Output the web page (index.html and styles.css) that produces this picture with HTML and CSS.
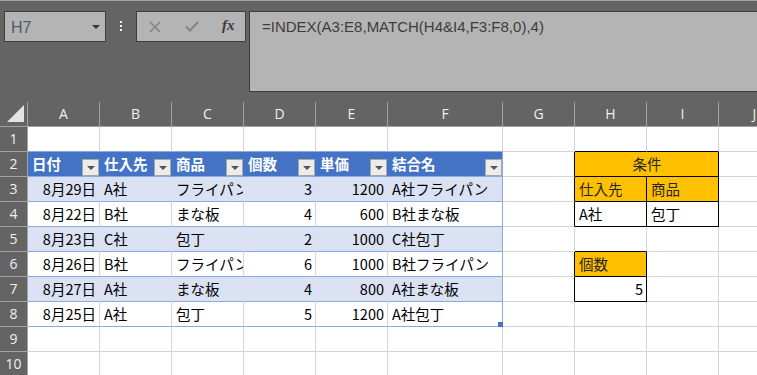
FILE: index.html
```html
<!DOCTYPE html>
<html lang="ja">
<head>
<meta charset="utf-8">
<title>Excel INDEX MATCH</title>
<link rel="stylesheet" href="styles.css">
</head>
<body>
<div class="topbar">
  <div class="namebox"><span class="ref">H7</span><svg class="nb-arrow" width="8" height="4" viewBox="0 0 8 4"><path d="M0 0H8L4 4Z"/></svg></div>
  <div class="dots"><i></i><i></i><i></i></div>
  <div class="fxbox">
    <svg class="ico-x" width="12" height="12" viewBox="0 0 12 12"><path d="M1 1L11 11M11 1L1 11"/></svg>
    <svg class="ico-ok" width="14" height="11" viewBox="0 0 14 11"><path d="M1 5.5L5 9.5L13 1"/></svg>
    <span class="fx">fx</span>
  </div>
  <div class="formula">=INDEX(A3:E8,MATCH(H4&amp;I4,F3:F8,0),4)</div>
</div>
<div class="sheet">
  <!-- column headers -->
  <div class="c corner"><svg width="27" height="24" viewBox="0 0 27 24"><path d="M24 3V20H7Z"/></svg></div>
  <div class="c ch">A</div><div class="c ch">B</div><div class="c ch">C</div><div class="c ch">D</div><div class="c ch">E</div><div class="c ch">F</div><div class="c ch">G</div><div class="c ch">H</div><div class="c ch">I</div><div class="c ch">J</div>

  <!-- row 1 -->
  <div class="c rh">1</div>
  <div class="c tt"></div><div class="c tt"></div><div class="c tt"></div><div class="c tt"></div><div class="c tt"></div><div class="c tt"></div>
  <div class="c"></div><div class="c bb"></div><div class="c bb"></div><div class="c"></div>

  <!-- row 2 -->
  <div class="c rh">2</div>
  <div class="c th">日付<span class="dd"><svg width="8" height="4" viewBox="0 0 8 4"><path d="M0 0H8L4 4Z"/></svg></span></div>
  <div class="c th">仕入先<span class="dd"><svg width="8" height="4" viewBox="0 0 8 4"><path d="M0 0H8L4 4Z"/></svg></span></div>
  <div class="c th">商品<span class="dd"><svg width="8" height="4" viewBox="0 0 8 4"><path d="M0 0H8L4 4Z"/></svg></span></div>
  <div class="c th">個数<span class="dd"><svg width="8" height="4" viewBox="0 0 8 4"><path d="M0 0H8L4 4Z"/></svg></span></div>
  <div class="c th">単価<span class="dd"><svg width="8" height="4" viewBox="0 0 8 4"><path d="M0 0H8L4 4Z"/></svg></span></div>
  <div class="c th tr">結合名<span class="dd"><svg width="8" height="4" viewBox="0 0 8 4"><path d="M0 0H8L4 4Z"/></svg></span></div>
  <div class="c br"></div>
  <div class="c org merged br bb">条件</div>
  <div class="c"></div>

  <!-- row 3 -->
  <div class="c rh">3</div>
  <div class="c band r">8月29日</div><div class="c band">A社</div><div class="c band">フライパン</div><div class="c band r">3</div><div class="c band r">1200</div><div class="c band tr">A社フライパン</div>
  <div class="c br"></div><div class="c org br bb">仕入先</div><div class="c org br bb">商品</div><div class="c"></div>

  <!-- row 4 -->
  <div class="c rh">4</div>
  <div class="c wr r">8月22日</div><div class="c wr">B社</div><div class="c wr">まな板</div><div class="c wr r">4</div><div class="c wr r">600</div><div class="c wr tr">B社まな板</div>
  <div class="c br"></div><div class="c br bb">A社</div><div class="c br bb">包丁</div><div class="c"></div>

  <!-- row 5 -->
  <div class="c rh">5</div>
  <div class="c band r">8月23日</div><div class="c band">C社</div><div class="c band">包丁</div><div class="c band r">2</div><div class="c band r">1000</div><div class="c band tr">C社包丁</div>
  <div class="c"></div><div class="c bb"></div><div class="c"></div><div class="c"></div>

  <!-- row 6 -->
  <div class="c rh">6</div>
  <div class="c wr r">8月26日</div><div class="c wr">B社</div><div class="c wr">フライパン</div><div class="c wr r">6</div><div class="c wr r">1000</div><div class="c wr tr">B社フライパン</div>
  <div class="c br"></div><div class="c org br bb">個数</div><div class="c"></div><div class="c"></div>

  <!-- row 7 -->
  <div class="c rh">7</div>
  <div class="c band r">8月27日</div><div class="c band">A社</div><div class="c band">まな板</div><div class="c band r">4</div><div class="c band r">800</div><div class="c band tr">A社まな板</div>
  <div class="c br"></div><div class="c r br bb">5</div><div class="c"></div><div class="c"></div>

  <!-- row 8 -->
  <div class="c rh">8</div>
  <div class="c wr r">8月25日</div><div class="c wr">A社</div><div class="c wr">包丁</div><div class="c wr r">5</div><div class="c wr r">1200</div><div class="c wr tr ov">A社包丁<span class="handle"></span></div>
  <div class="c"></div><div class="c"></div><div class="c"></div><div class="c"></div>

  <!-- row 9 -->
  <div class="c rh">9</div>
  <div class="c"></div><div class="c"></div><div class="c"></div><div class="c"></div><div class="c"></div><div class="c"></div><div class="c"></div><div class="c"></div><div class="c"></div><div class="c"></div>

  <!-- row 10 -->
  <div class="c rh">10</div>
  <div class="c"></div><div class="c"></div><div class="c"></div><div class="c"></div><div class="c"></div><div class="c"></div><div class="c"></div><div class="c"></div><div class="c"></div><div class="c"></div>
</div>
</body>
</html>
```

FILE: styles.css
```css
html, body {
  margin: 0;
  padding: 0;
}
body {
  width: 757px;
  height: 375px;
  overflow: hidden;
  background: #ffffff;
  font-family: "Noto Sans CJK JP", "Noto Sans", sans-serif;
}

/* ---------- formula bar ---------- */
.topbar {
  box-sizing: border-box;
  height: 102px;
  background: #646464;
  border-top: 1px solid #a3a3a3;
  padding: 10px 0 0 4px;
  display: flex;
  align-items: flex-start;
  width: 900px;
}
.namebox {
  box-sizing: border-box;
  width: 102px;
  height: 31px;
  background: #b4b4b4;
  border: 1px solid #3e3e3e;
  display: flex;
  align-items: center;
  justify-content: space-between;
  padding: 2px 5px 0 6px;
}
.ref {
  font-family: "Liberation Sans", Arial, sans-serif;
  font-size: 16px;
  color: #4d5a68;
}
.nb-arrow {
  fill: #3a3a3a;
  margin-top: -2px;
}
.dots {
  width: 30px;
  height: 31px;
  display: flex;
  flex-direction: column;
  align-items: center;
  padding-top: 10px;
  box-sizing: border-box;
  gap: 2px;
}
.dots i {
  display: block;
  width: 2px;
  height: 2px;
  background: #f2f2f2;
}
.fxbox {
  box-sizing: border-box;
  width: 110px;
  height: 31px;
  background: #b4b4b4;
  border: 1px solid #3e3e3e;
  display: flex;
  align-items: center;
  padding-left: 12px;
}
.ico-x path {
  stroke: #858585;
  stroke-width: 1.6;
  fill: none;
}
.ico-ok {
  margin-left: 24px;
}
.ico-ok path {
  stroke: #858585;
  stroke-width: 2.2;
  fill: none;
}
.fx {
  margin-left: 23px;
  font-family: "Liberation Serif", "Times New Roman", serif;
  font-style: italic;
  font-weight: bold;
  font-size: 15px;
  color: #3a3a3a;
  margin-top: -3px;
}
.formula {
  box-sizing: border-box;
  margin-left: 3px;
  width: 540px;
  height: 81px;
  background: #b4b4b4;
  border: 1px solid #3e3e3e;
  padding: 6px 0 0 12px;
  font-family: "Liberation Sans", Arial, sans-serif;
  font-size: 15px;
  line-height: 17px;
  color: #3c3c3c;
  white-space: nowrap;
}

/* ---------- sheet grid ---------- */
.sheet {
  display: grid;
  grid-template-columns: 28px repeat(5, 72px) 115px repeat(4, 72px);
  grid-auto-rows: 25px;
  width: 900px;
}
.c {
  box-sizing: border-box;
  position: relative;
  border-right: 1px solid #d4d4d4;
  border-bottom: 1px solid #d4d4d4;
  font-size: 14.5px;
  line-height: 24px;
  padding: 0 3px 0 4px;
  white-space: nowrap;
  overflow: hidden;
  color: #000;
}
.corner,
.ch,
.rh {
  background: #646464;
  border-color: #a3a3a3;
  color: #f0f0f0;
  text-align: center;
  padding: 0;
  font-family: "Open Sans", "Liberation Sans", sans-serif;
  font-size: 14px;
}
.corner svg {
  display: block;
  fill: #e4e4e4;
}

/* table styling */
.tt { border-bottom-color: #8ea9db; }
.th {
  background: #4472c4;
  color: #ffffff;
  font-weight: bold;
  border-right-color: transparent;
  border-bottom-color: #8ea9db;
}
.band {
  background: #d9e1f2;
  border-right-color: transparent;
  border-bottom-color: #8ea9db;
}
.wr { border-bottom-color: #8ea9db; }
.tr { border-right-color: #8ea9db; }
.r { text-align: right; }
.ov { overflow: visible; }

.dd {
  position: absolute;
  right: 0;
  bottom: 0;
  box-sizing: border-box;
  width: 17px;
  height: 17px;
  background: #ececec;
  border: 1px solid #a8a8a8;
  display: flex;
  align-items: center;
  justify-content: center;
}
.dd svg {
  fill: #555555;
  display: block;
}
.handle {
  position: absolute;
  right: -1px;
  bottom: -1px;
  width: 5px;
  height: 5px;
  background: #4472c4;
}

/* criteria block */
.org {
  background: #ffc000;
  color: #262626;
}
.merged {
  grid-column: span 2;
  text-align: center;
}
.bb { border-bottom-color: #000; }
.br { border-right-color: #000; }
```
